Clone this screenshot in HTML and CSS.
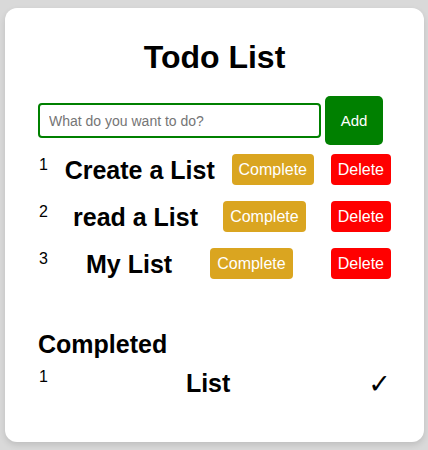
FILE: index.html
```html
<!DOCTYPE html>
<html lang="en">
<head>
<meta charset="utf-8">
<title>Todo List</title>
<link rel="stylesheet" href="styles.css">
</head>
<body>
<main class="card">
  <h1 class="title">Todo List</h1>
  <form class="add-form">
    <input class="add-input" type="text" placeholder="What do you want to do?">
    <button class="add-btn" type="button">Add</button>
  </form>
  <ul class="todo-list">
    <li class="todo-row">
      <span class="num">1</span>
      <span class="todo-text">Create a List</span>
      <button class="btn btn-complete" type="button">Complete</button>
      <button class="btn btn-delete" type="button">Delete</button>
    </li>
    <li class="todo-row">
      <span class="num">2</span>
      <span class="todo-text">read a List</span>
      <button class="btn btn-complete" type="button">Complete</button>
      <button class="btn btn-delete" type="button">Delete</button>
    </li>
    <li class="todo-row">
      <span class="num">3</span>
      <span class="todo-text">My List</span>
      <button class="btn btn-complete" type="button">Complete</button>
      <button class="btn btn-delete" type="button">Delete</button>
    </li>
  </ul>
  <h2 class="done-title">Completed</h2>
  <ul class="done-list">
    <li class="done-row">
      <span class="num">1</span>
      <span class="todo-text">List</span>
      <span class="check">✓</span>
    </li>
  </ul>
</main>
</body>
</html>
```

FILE: styles.css
```css
html, body {
  margin: 0;
  padding: 0;
}
body {
  background: #d9d9d9;
  font-family: "Liberation Sans", Arial, sans-serif;
  color: #000;
  height: 450px;
  overflow: hidden;
}
.card {
  box-sizing: border-box;
  width: 419px;
  height: 434px;
  margin: 8px 4px 0 5px;
  padding: 31px 33px 0 33px;
  background: #fff;
  border-radius: 12px;
  box-shadow: 0 3px 6px rgba(0, 0, 0, 0.12);
}
.title {
  margin: 0;
  font-size: 32px;
  line-height: 37px;
  font-weight: bold;
  text-align: center;
}
.add-form {
  display: flex;
  align-items: center;
  gap: 4px;
  margin: 20px 0 0 0;
}
.add-input {
  box-sizing: border-box;
  width: 283px;
  height: 35px;
  border: 2px solid #008000;
  border-radius: 4px;
  padding: 0 9px;
  font-family: "Liberation Sans", Arial, sans-serif;
  font-size: 14px;
  outline: none;
}
.add-input::placeholder {
  color: #757575;
}
.add-btn {
  width: 58px;
  height: 49px;
  border: none;
  border-radius: 5px;
  background: #008000;
  color: #fff;
  font-family: "Liberation Sans", Arial, sans-serif;
  font-size: 15px;
  padding: 0;
}
.todo-list, .done-list {
  list-style: none;
  margin: 0;
  padding: 0;
  display: flex;
  flex-direction: column;
  gap: 16px;
}
.todo-list {
  margin-top: 9px;
}
.todo-row, .done-row {
  display: flex;
  align-items: center;
  justify-content: space-between;
}
.todo-row {
  height: 31px;
}
.num {
  align-self: flex-start;
  font-size: 16px;
  line-height: 18px;
  margin-top: 2px;
  padding-left: 1px;
}
.todo-text {
  font-size: 25px;
  line-height: 28px;
  font-weight: bold;
}
.btn {
  border: none;
  border-radius: 4px;
  color: #fff;
  font-family: "Liberation Sans", Arial, sans-serif;
  font-size: 16px;
  line-height: 19px;
  padding: 6px 7px;
}
.btn-complete {
  background: #daa520;
}
.btn-delete {
  background: #ff0000;
}
.done-title {
  margin: 51px 0 0 0;
  font-size: 25px;
  line-height: 28px;
  font-weight: bold;
}
.done-list {
  margin-top: 9px;
}
.done-row .num {
  margin-top: 1px;
}
.check {
  font-family: "DejaVu Sans", sans-serif;
  font-size: 27px;
  line-height: 28px;
  margin-top: 3px;
}
```
